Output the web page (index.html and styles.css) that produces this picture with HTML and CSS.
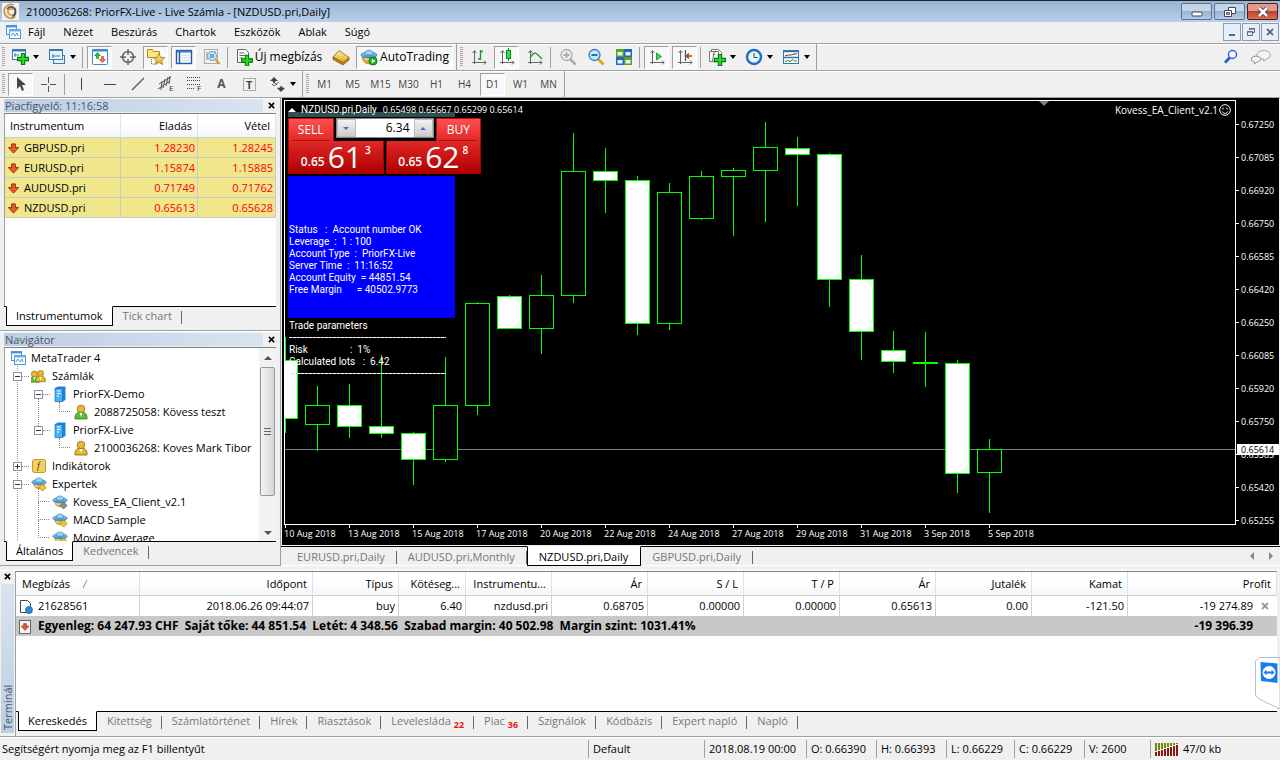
FILE: index.html
```html
<!DOCTYPE html>
<html lang="hu">
<head>
<meta charset="utf-8">
<title>2100036268: PriorFX-Live - Live Számla - [NZDUSD.pri,Daily]</title>
<link rel="stylesheet" href="styles.css">
</head>
<body>
<svg class="defs" aria-hidden="true">
  <defs>
    <linearGradient id="gold" x1="0" y1="0" x2="0" y2="1"><stop offset="0" stop-color="#fff0a0"/><stop offset="1" stop-color="#d9a520"/></linearGradient>
    <linearGradient id="blue" x1="0" y1="0" x2="0" y2="1"><stop offset="0" stop-color="#a9dcfa"/><stop offset="1" stop-color="#2f86cc"/></linearGradient>
  </defs>
  <symbol id="i-plus" viewBox="0 0 11 11"><path d="M4 .5h3V4h3.500v3H7v3.500H4V7H.5V4H4z" fill="#22dd22" stroke="#067a06"/></symbol>
  <symbol id="i-windows" viewBox="0 0 16 16"><rect x="1.500" y="1.500" width="10" height="9" fill="#fff" stroke="#4a96dc"/><path d="M1 2.500h11" stroke="#4a96dc" stroke-width="2"/><rect x="4.500" y="5.500" width="11" height="9" fill="#fff" stroke="#4a96dc"/><path d="M4 6.500h12" stroke="#6cb0ec" stroke-width="2"/><path d="M6 12l2-3 2 3 2-3 1 3" fill="none" stroke="#4a96dc"/></symbol>
  <symbol id="i-newchart" viewBox="0 0 18 18"><rect x="1.500" y="1.500" width="13" height="10" fill="#fff" stroke="#3a78ae"/><path d="M1 2.500h14" stroke="#3a78ae" stroke-width="2"/><path d="M3 7h5M4 5v4" stroke="#3a78ae"/><use href="#i-plus" x="6" y="5" width="12" height="12"/></symbol>
  <symbol id="i-profiles" viewBox="0 0 18 18"><rect x="5.500" y="7.500" width="11" height="8" fill="#e6f1fb" stroke="#3a78ae"/><rect x="1.500" y="1.500" width="13" height="10" fill="#e6f1fb" stroke="#3a78ae"/><path d="M1 2.500h14M4 8h8M5 6v4" stroke="#3a78ae"/></symbol>
  <symbol id="i-market" viewBox="0 0 18 18"><rect x="1.500" y="1.500" width="15" height="15" rx="1" fill="#fff" stroke="#3a8ad0"/><path d="M1 2.500h16" stroke="#3a8ad0" stroke-width="2"/><path d="M6.500 4.500l3 3h-2v3h-2v-3h-2z" fill="#2fc22f" stroke="#128012" stroke-width=".6"/><path d="M11.500 14.500l3-3h-2v-3h-2v3h-2z" fill="#ff7040" stroke="#b03010" stroke-width=".6"/></symbol>
  <symbol id="i-target" viewBox="0 0 18 18"><circle cx="9" cy="9" r="5.500" fill="none" stroke="#666" stroke-width="1.500"/><path d="M9 1v6M9 11v6M1 9h6M11 9h6" stroke="#666" stroke-width="1.500"/></symbol>
  <symbol id="i-navi" viewBox="0 0 18 18"><path d="M.5 1.500h5l1 2h6v6H.5z" fill="#ffe680" stroke="#b08a10"/><path d="M4.500 11v5H8" fill="none" stroke="#666" stroke-dasharray="1 1"/><path d="M12 5.500l1.700 3.800 4 .4-3 2.700.9 4.100L12 14.400l-3.600 2.100.9-4.100-3-2.700 4-.4z" fill="url(#gold)" stroke="#a87a00" stroke-width=".8"/></symbol>
  <symbol id="i-terminal" viewBox="0 0 18 18"><rect x="1.500" y="2.500" width="15" height="13" fill="#f4faff" stroke="#245ba4" stroke-width="1.400"/><path d="M2 3.500h14" stroke="#3a78c0" stroke-width="2"/><path d="M4.500 4v11" stroke="#245ba4" stroke-width="1.500"/><path d="M7 7.500h8M7 10h8M7 12.500h8" stroke="#d3e2ee"/></symbol>
  <symbol id="i-tester" viewBox="0 0 18 18"><rect x="1.500" y="1.500" width="13" height="14" fill="#f2f2f2" stroke="#aaa"/><path d="M4 4v8M7 3v9M12 3v3" stroke="#789"/><circle cx="9" cy="8" r="4.500" fill="#bfe2fa" fill-opacity=".8" stroke="#7aa4c4"/><path d="M8 6v4M10 6v4" stroke="#2a6eaa"/><path d="M12.500 11.500l4 4.500" stroke="#d8a020" stroke-width="2.500"/></symbol>
  <symbol id="i-order" viewBox="0 0 18 18"><path d="M2.500 1.500h8l3 3v10h-11z" fill="#fff" stroke="#666"/><path d="M4.500 5h5M4.500 7.500h7M4.500 10h4" stroke="#666"/><use href="#i-plus" x="6" y="6.500" width="12" height="12"/></symbol>
  <symbol id="i-book" viewBox="0 0 18 18"><path d="M1 9l6-6.500 10 7L11.500 15z" fill="url(#gold)" stroke="#8a6008" stroke-width=".8"/><path d="M1 9v2.500l10 5.500 6-5V9.500L11.500 15z" fill="#c48a10" stroke="#8a6008" stroke-width=".8"/></symbol>
  <symbol id="i-hat" viewBox="0 0 18 18"><path d="M3 9c1 7 10 7 12 0z" fill="url(#gold)" stroke="#b08a20" stroke-width=".8"/><ellipse cx="9" cy="7" rx="8" ry="3" fill="url(#blue)" stroke="#3a82b4" stroke-width=".8"/><path d="M4.500 6c0-5 8.500-5 9 0-2 1.500-7 1.500-9 0z" fill="#9bd4f4" stroke="#3a82b4" stroke-width=".8"/></symbol>
  <symbol id="i-auto" viewBox="0 0 18 18"><path d="M2 9c1 9 12 9 14 0z" fill="url(#gold)" stroke="#b08a20" stroke-width=".8"/><use href="#i-hat"/><circle cx="13" cy="13" r="4" fill="#1fb51f" stroke="#0a7a0a"/><path d="M11.800 10.700v4.600l3.600-2.300z" fill="#fff"/></symbol>
  <symbol id="i-ea" viewBox="0 0 18 18"><use href="#i-hat"/><path d="M13 9l4 4-4 4-4-4z" fill="#f4c430" stroke="#a87a00" stroke-width=".8"/></symbol>
  <symbol id="i-eagray" viewBox="0 0 18 18"><use href="#i-hat"/><path d="M13 9l4 4-4 4-4-4z" fill="#8c8c8c" stroke="#666" stroke-width=".8"/></symbol>
  <symbol id="i-axes" viewBox="0 0 18 18"><path d="M4.500 16V3M2.500 5l2-2.500 2 2.500M2 14.500h14M14 12.500l2 2-2 2" fill="none" stroke="#666"/></symbol>
  <symbol id="i-bars" viewBox="0 0 18 18"><use href="#i-axes"/><path d="M10.500 2v10M10.500 3.500H13M8 11h2.500" stroke="#1a9a2a" stroke-width="1.400"/></symbol>
  <symbol id="i-candle" viewBox="0 0 18 18"><use href="#i-axes"/><path d="M10.500 0v13" stroke="#0a8a1a"/><rect x="8.500" y="2.500" width="4" height="8" fill="#2ee04a" stroke="#0a8a1a"/></symbol>
  <symbol id="i-line" viewBox="0 0 18 18"><use href="#i-axes"/><path d="M4 10c3-5 5-6 7-4s3 3 5 5" fill="none" stroke="#1a9a2a" stroke-width="1.300"/></symbol>
  <symbol id="i-zin" viewBox="0 0 18 18"><path d="M11 11l5.500 5.500" stroke="#aaa" stroke-width="2.500"/><circle cx="7.500" cy="7" r="5.500" fill="#eee" stroke="#aaa" stroke-width="1.300"/><path d="M4.500 7h6M7.500 4v6" stroke="#aaa" stroke-width="1.800"/></symbol>
  <symbol id="i-zout" viewBox="0 0 18 18"><path d="M11 11l5.500 5.500" stroke="#d8a820" stroke-width="3"/><circle cx="7.500" cy="7" r="5.500" fill="#c5e8ff" stroke="#2f7cc0" stroke-width="1.300"/><path d="M4.500 7h6" stroke="#1d5fa8" stroke-width="1.800"/></symbol>
  <symbol id="i-tile" viewBox="0 0 18 18"><path d="M1 1h8v8H1zM9 9h8v8H9z" fill="#55a322"/><path d="M9 1h8v8H9zM1 9h8v8H1z" fill="#2565c4"/><path d="M2.500 4h5v3.500h-5zM10.500 4h5v3.500h-5zM2.500 12h5v3.500h-5zM10.500 12h5v3.500h-5z" fill="#eef6ff"/></symbol>
  <symbol id="i-scroll" viewBox="0 0 18 18"><use href="#i-axes"/><path d="M8.500 5v7l5-3.500z" fill="#3fd14f" stroke="#0a8a1a" stroke-width=".8"/></symbol>
  <symbol id="i-shift" viewBox="0 0 18 18"><use href="#i-axes"/><path d="M9.500 2v11" stroke="#2565a4" stroke-width="1.300"/><path d="M16 8h-5M13 5.500L10.500 8l2.500 2.500" fill="none" stroke="#c03a10" stroke-width="1.500"/></symbol>
  <symbol id="i-sheets" viewBox="0 0 18 18"><path d="M3.500 3.500v-2h7l3 3v9h-3" fill="#fff" stroke="#777"/><path d="M1.500 3.500h9v10h-9z" fill="#fff" stroke="#777"/></symbol>
  <symbol id="i-clock" viewBox="0 0 18 18"><circle cx="9" cy="9" r="7" fill="#eaf6ff" stroke="#1f6fc4" stroke-width="2.500"/><path d="M9 5v4.500h3.500" fill="none" stroke="#245"/></symbol>
  <symbol id="i-templ" viewBox="0 0 18 18"><rect x="1.500" y="2.500" width="15" height="13" fill="#fff" stroke="#2f7ab4"/><path d="M1 3.500h16M2 9.500h14" stroke="#2f7ab4" stroke-width="1.500"/><path d="M3 8l3-1 3 0 3-1 3 0" fill="none" stroke="#a02020"/><path d="M3 13.500l3-1 2 1 3-2 2 2 2-1" fill="none" stroke="#209030"/></symbol>
  <symbol id="i-cursor" viewBox="0 0 18 18"><path d="M5 2v12l3-3 2 5 2-1-2-5h4z" fill="#444"/></symbol>
  <symbol id="i-cross" viewBox="0 0 18 18"><path d="M8.500 2v6M8.500 11v6M1 9.500h6M10 9.500h6" stroke="#555"/></symbol>
  <symbol id="i-vline" viewBox="0 0 18 18"><path d="M8.500 3v12" stroke="#444"/></symbol>
  <symbol id="i-hline" viewBox="0 0 18 18"><path d="M3 9.500h12" stroke="#444"/></symbol>
  <symbol id="i-trend" viewBox="0 0 18 18"><path d="M3 15L15 3" stroke="#555" stroke-width="1.300"/></symbol>
  <symbol id="i-arrows" viewBox="0 0 18 18"><path d="M6 2l4 4-2.500 0-1.500 3-1.500-3H2z" fill="#444"/><path d="M7 8l2 2M4 9l2 2 5-4" fill="none" stroke="#666"/><path d="M13 17l-4-4 3-.5 1-2 1.500 2 2.500.5z" fill="#444"/></symbol>
  <symbol id="i-down" viewBox="0 0 12 12"><path d="M4 1h4v4h3.500L6 11 .5 5H4z" fill="#f05a28" stroke="#8a2008"/></symbol>
  <symbol id="i-user" viewBox="0 0 16 16"><path d="M2 15c-.5-5 2-7 6-7s6.500 2 6 7z" fill="var(--c)" stroke="#7a6410" stroke-width=".8"/><circle cx="8" cy="5" r="3.800" fill="#e8b830" stroke="#8a6a10" stroke-width=".8"/><path d="M6.500 9L8 13l1.500-4" fill="#fff"/></symbol>
  <symbol id="i-server" viewBox="0 0 16 16"><path d="M3 2l3-1.500h7.500V14l-3 1.500H3z" fill="#1d86dc"/><path d="M3 2.500h7.500v13H3z" fill="#4bb4f6" stroke="#1a6fb8" stroke-width=".7"/><path d="M5 5h3.500M5 7.500h3.500M5 10h2" stroke="#fff"/></symbol>
  <symbol id="i-close" viewBox="0 0 8 8"><path d="M1 1l6 6M7 1L1 7" stroke="currentColor" stroke-width="1.800"/></symbol>
  <symbol id="i-min" viewBox="0 0 14 12"><rect x="2" y="6" width="10" height="4" rx="1" fill="#fff" stroke="#445"/></symbol>
  <symbol id="i-restore" viewBox="0 0 14 12"><path d="M5.500 1.500h7v6h-7z" fill="#fff" stroke="#445"/><path d="M1.500 4.500h7v6h-7z" fill="#fff" stroke="#445"/><path d="M3.500 6.500h3v2h-3z" fill="#9ab" stroke="#445" stroke-width=".8"/></symbol>
</svg>

<div class="app">
  <header class="titlebar">
    <svg class="logo" viewBox="0 0 16 16"><rect width="16" height="16" fill="#f6f2ec"/><path d="M11 1.800A6.500 6.500 0 1 0 12.500 13" fill="none" stroke="#c89a58" stroke-width="1.800"/><path d="M5 6a4 4 0 0 1 7.500 2.500 4 4 0 0 1-3 4" fill="none" stroke="#555" stroke-width="2"/><path d="M10.500 6.500A2.800 2.800 0 1 0 9 11" fill="none" stroke="#d8a050" stroke-width="1.800"/></svg>
    <span class="title">2100036268: PriorFX-Live - Live Számla - [NZDUSD.pri,Daily]</span>
    <button class="wbtn" aria-label="Kis méret"><svg width="14" height="12"><use href="#i-min"/></svg></button>
    <button class="wbtn" aria-label="Visszaállítás"><svg width="14" height="12"><use href="#i-restore"/></svg></button>
    <button class="wbtn wclose" aria-label="Bezárás"><svg width="14" height="12" viewBox="0 0 14 12"><path d="M3 2l8 8M11 2l-8 8" stroke="#445" stroke-width="4.500"/><path d="M3 2l8 8M11 2l-8 8" stroke="#fff" stroke-width="2.500"/></svg></button>
  </header>

  <nav class="menubar">
    <svg width="16" height="16"><use href="#i-windows"/></svg>
    <button>Fájl</button><button>Nézet</button><button>Beszúrás</button><button>Chartok</button><button>Eszközök</button><button>Ablak</button><button>Súgó</button>
    <span class="grow"></span>
    <button class="mdi" aria-label="Kis méret"><svg width="10" height="10" viewBox="0 0 10 10"><path d="M2 8h6" stroke="#667" stroke-width="2"/></svg></button>
    <button class="mdi" aria-label="Visszaállítás"><svg width="10" height="10" viewBox="0 0 10 10"><path d="M3.500 3V1.500h5v4H7M1.500 4.500h5v4h-5zM1 5h6M3 2h6" fill="none" stroke="#667"/></svg></button>
    <button class="mdi" aria-label="Bezárás"><svg width="8" height="8"><use href="#i-close"/></svg></button>
  </nav>

  <div class="toolrow">
    <i class="grip"></i>
    <button class="tb drop" aria-label="Új chart"><svg><use href="#i-newchart"/></svg></button>
    <button class="tb drop" aria-label="Profilok"><svg><use href="#i-profiles"/></svg></button>
    <i class="sep"></i>
    <button class="tb on" aria-label="Piacfigyelő"><svg><use href="#i-market"/></svg></button>
    <button class="tb" aria-label="Adatablak"><svg><use href="#i-target"/></svg></button>
    <button class="tb on" aria-label="Navigátor"><svg><use href="#i-navi"/></svg></button>
    <button class="tb on" aria-label="Terminál"><svg><use href="#i-terminal"/></svg></button>
    <button class="tb" aria-label="Stratégia teszter"><svg><use href="#i-tester"/></svg></button>
    <i class="sep"></i>
    <button class="tb order"><svg><use href="#i-order"/></svg>Új megbízás</button>
    <button class="tb" aria-label="MetaEditor"><svg><use href="#i-book"/></svg></button>
    <button class="tb on auto"><svg><use href="#i-auto"/></svg>AutoTrading</button>
    <i class="end"></i>
    <i class="grip"></i>
    <button class="tb" aria-label="Oszlopok"><svg><use href="#i-bars"/></svg></button>
    <button class="tb on" aria-label="Gyertyák"><svg><use href="#i-candle"/></svg></button>
    <button class="tb" aria-label="Vonal"><svg><use href="#i-line"/></svg></button>
    <i class="sep"></i>
    <button class="tb" aria-label="Nagyítás"><svg><use href="#i-zin"/></svg></button>
    <button class="tb" aria-label="Kicsinyítés"><svg><use href="#i-zout"/></svg></button>
    <button class="tb" aria-label="Mozaik"><svg><use href="#i-tile"/></svg></button>
    <i class="sep"></i>
    <button class="tb on" aria-label="Automatikus görgetés"><svg><use href="#i-scroll"/></svg></button>
    <button class="tb on" aria-label="Chart eltolás"><svg><use href="#i-shift"/></svg></button>
    <i class="sep"></i>
    <button class="tb drop" aria-label="Indikátorok"><svg viewBox="0 0 18 18"><use href="#i-sheets"/><text x="4" y="11" class="serif">f</text><use href="#i-plus" x="6" y="6" width="12" height="12"/></svg></button>
    <button class="tb drop" aria-label="Periódusok"><svg><use href="#i-clock"/></svg></button>
    <button class="tb drop" aria-label="Sablonok"><svg><use href="#i-templ"/></svg></button>
    <i class="end"></i>
    <span class="grow"></span>
    <button class="tb" aria-label="Keresés"><svg viewBox="0 0 18 18"><path d="M8 9.500L3 14.500" stroke="#2a62d0" stroke-width="3"/><circle cx="10.500" cy="6.500" r="4" fill="#fff" stroke="#2a6ae0" stroke-width="1.500"/></svg></button>
    <button class="tb chat" aria-label="Üzenetek"><svg class="wide" viewBox="0 0 24 18"><path d="M15 13.500v-2.200C4 11 6 2 15 2c9 0 9 7.500 3 9.200z" fill="#f4f4f4" stroke="#999"/><path d="M5 16.500v-2.200c-5-.5-5-6.300 1.500-6.300s6.500 5.500 1.500 6.300z" fill="#f4f4f4" stroke="#888"/></svg></button>
  </div>

  <div class="toolrow second">
    <i class="grip"></i>
    <button class="tb on" aria-label="Kurzor"><svg><use href="#i-cursor"/></svg></button>
    <button class="tb" aria-label="Szálkereszt"><svg><use href="#i-cross"/></svg></button>
    <i class="sep"></i>
    <button class="tb" aria-label="Függőleges vonal"><svg><use href="#i-vline"/></svg></button>
    <button class="tb" aria-label="Vízszintes vonal"><svg><use href="#i-hline"/></svg></button>
    <button class="tb" aria-label="Trendvonal"><svg><use href="#i-trend"/></svg></button>
    <button class="tb" aria-label="Csatorna"><svg viewBox="0 0 18 18"><path d="M2 9L14 2M1 14l12-8M5 6l-1 9M8 4L6 13M11 2L9 11M13 1l-1 8" stroke="#555"/><text x="12" y="16" class="tag">E</text></svg></button>
    <button class="tb" aria-label="Fibonacci"><svg viewBox="0 0 18 18"><path d="M2 2.500h13M2 5.500h13M2 9.500h13M2 13.500h8" stroke="#444" stroke-dasharray="1 1"/><text x="12" y="16" class="tag">F</text></svg></button>
    <button class="tb letter">A</button>
    <button class="tb" aria-label="Szövegcímke"><svg viewBox="0 0 18 18"><rect x="2.500" y="3.500" width="12" height="12" fill="none" stroke="#666" stroke-dasharray="1 1"/><text x="5" y="14" class="tee">T</text></svg></button>
    <button class="tb drop" aria-label="Nyilak"><svg><use href="#i-arrows"/></svg></button>
    <i class="end"></i>
    <i class="grip"></i>
    <button class="tb tf">M1</button><button class="tb tf">M5</button><button class="tb tf">M15</button><button class="tb tf">M30</button><button class="tb tf">H1</button><button class="tb tf">H4</button><button class="tb tf on">D1</button><button class="tb tf">W1</button><button class="tb tf">MN</button>
    <i class="end"></i>
  </div>

  <main class="work">
    <aside class="docks">
      <section class="dock market">
        <div class="dockhead"><h2>Piacfigyelő: 11:16:58</h2><button aria-label="Bezárás"><svg width="7" height="7"><use href="#i-close"/></svg></button></div>
        <div class="dockbody">
          <table class="quotes">
            <colgroup><col><col class="cbid"><col class="cask"></colgroup>
            <thead><tr><th>Instrumentum</th><th>Eladás</th><th>Vétel</th></tr></thead>
            <tbody>
              <tr><td><svg><use href="#i-down"/></svg>GBPUSD.pri</td><td>1.28230</td><td>1.28245</td></tr>
              <tr><td><svg><use href="#i-down"/></svg>EURUSD.pri</td><td>1.15874</td><td>1.15885</td></tr>
              <tr><td><svg><use href="#i-down"/></svg>AUDUSD.pri</td><td>0.71749</td><td>0.71762</td></tr>
              <tr><td><svg><use href="#i-down"/></svg>NZDUSD.pri</td><td>0.65613</td><td>0.65628</td></tr>
            </tbody>
          </table>
        </div>
        <div class="tabs"><button class="tab active">Instrumentumok</button><button class="tab">Tick chart</button></div>
      </section>

      <section class="dock navi">
        <div class="dockhead"><h2>Navigátor</h2><button aria-label="Bezárás"><svg width="7" height="7"><use href="#i-close"/></svg></button></div>
        <div class="dockbody treebox">
          <ul class="tree">
            <li class="l0"><svg><use href="#i-windows"/></svg>MetaTrader 4</li>
            <li class="l1"><i class="box"></i><svg class="green" viewBox="0 0 16 16"><use href="#i-user" x="-3" y="1" width="13" height="15"/><use class="gold" href="#i-user" x="3" y="0" width="13" height="16"/></svg>Számlák</li>
            <li class="l2"><i class="box"></i><svg><use href="#i-server"/></svg>PriorFX-Demo</li>
            <li class="l3"><i class="stub"></i><svg class="green"><use href="#i-user"/></svg>2088725058: Kövess teszt</li>
            <li class="l2"><i class="box tall"></i><svg><use href="#i-server"/></svg>PriorFX-Live</li>
            <li class="l3"><i class="stub"></i><svg class="gold"><use href="#i-user"/></svg>2100036268: Koves Mark Tibor</li>
            <li class="l1"><i class="box plus"></i><svg viewBox="0 0 16 16"><rect x="1.500" y="1.500" width="13" height="13" rx="2" fill="#f6d060" stroke="#c09820"/><text x="6" y="11" class="serif">f</text></svg>Indikátorok</li>
            <li class="l1"><i class="box"></i><svg><use href="#i-ea"/></svg>Expertek</li>
            <li class="leaf"><i class="stub"></i><svg><use href="#i-eagray"/></svg>Kovess_EA_Client_v2.1</li>
            <li class="leaf"><i class="stub"></i><svg><use href="#i-ea"/></svg>MACD Sample</li>
            <li class="leaf"><i class="stub"></i><svg><use href="#i-ea"/></svg>Moving Average</li>
          </ul>
          <div class="scrollbar"><i class="tri up"></i><div class="thumb"><i></i></div><span class="grow"></span><i class="tri dn"></i></div>
        </div>
        <div class="tabs"><button class="tab active">Általános</button><button class="tab">Kedvencek</button></div>
      </section>
    </aside>

    <section class="charts">
      <div class="chart">
        <div class="plot">
          <svg class="candles" id="candles" width="950" height="423"></svg>
          <i class="shiftmark"></i>
          <div class="eaname">Kovess_EA_Client_v2.1<svg width="12" height="12" viewBox="0 0 12 12"><circle cx="6" cy="6" r="5.300" fill="none" stroke="#fff"/><path d="M4 3.500v2M8 3.500v2M3 7.500c1.500 2.500 4.500 2.500 6 0" fill="none" stroke="#fff"/></svg></div>
          <div class="overlay">
            <div class="symbol"><i class="tri up"></i><span>NZDUSD.pri,Daily</span><span class="ohlc">0.65498 0.65667 0.65299 0.65614</span></div>
            <div class="oneclick">
              <div class="octop">
                <button class="side">SELL</button>
                <div class="lots"><button aria-label="Kevesebb"><i class="tri dn"></i></button><input aria-label="Kötésegység" value="6.34"><button aria-label="Több"><i class="tri up"></i></button></div>
                <button class="side">BUY</button>
              </div>
              <div class="ocprices">
                <div class="price"><span>0.65</span><b>61</b><sup>3</sup></div>
                <div class="price"><span>0.65</span><b>62</b><sup>8</sup></div>
              </div>
            </div>
            <div class="status"><pre>Status   :  Account number OK
Leverage  :  1 : 100
Account Type  :  PriorFX-Live
Server Time  :  11:16:52
Account Equity  = 44851.54
Free Margin      = 40502.9773</pre></div>
            <div class="params">
              <p>Trade parameters</p>
              <hr>
              <pre>Risk                 :  1%
Calculated lots   :  6.42</pre>
              <hr>
            </div>
          </div>
        </div>
        <ul class="scale">
          <li>0.67250</li><li>0.67085</li><li>0.66920</li><li>0.66750</li><li>0.66585</li><li>0.66420</li><li>0.66250</li><li>0.66085</li><li>0.65920</li><li>0.65750</li><li>0.65585</li><li>0.65420</li><li>0.65255</li>
        </ul>
        <span class="now">0.65614</span>
        <ul class="dates"><li>10 Aug 2018</li><li>13 Aug 2018</li><li>15 Aug 2018</li><li>17 Aug 2018</li><li>20 Aug 2018</li><li>22 Aug 2018</li><li>24 Aug 2018</li><li>27 Aug 2018</li><li>29 Aug 2018</li><li>31 Aug 2018</li><li>3 Sep 2018</li><li>5 Sep 2018</li></ul>
      </div>
      <div class="tabs charttabs">
        <button class="tab">EURUSD.pri,Daily</button><button class="tab">AUDUSD.pri,Monthly</button><button class="tab active">NZDUSD.pri,Daily</button><button class="tab">GBPUSD.pri,Daily</button>
        <span class="grow"></span>
        <button class="pager" aria-label="Előző"><i class="tri lf"></i></button><button class="pager" aria-label="Következő"><i class="tri rt"></i></button>
      </div>
    </section>
  </main>

  <section class="terminal">
    <div class="strip"><button aria-label="Bezárás"><svg width="7" height="7"><use href="#i-close"/></svg></button><h2>Terminál</h2></div>
    <div class="termbody">
      <div class="termtable">
        <table class="trades">
          <colgroup><col class="w124"><col class="w173"><col class="w86"><col class="w67"><col class="w86"><col class="w96"><col class="w96"><col class="w96"><col class="w96"><col class="w96"><col class="w96"><col></colgroup>
          <thead><tr><th>Megbízás<svg class="sort" width="10" height="8" viewBox="0 0 10 8"><path d="M1 8L5 0" stroke="#888"/></svg></th><th>Időpont</th><th>Típus</th><th>Kötéseg...</th><th>Instrumentu...</th><th>Ár</th><th>S / L</th><th>T / P</th><th>Ár</th><th>Jutalék</th><th>Kamat</th><th>Profit</th></tr></thead>
          <tbody>
            <tr><td><svg width="14" height="15" viewBox="0 0 14 15"><path d="M1.500 1.500h7l3 3v9h-10z" fill="#fff" stroke="#444"/><circle cx="10" cy="11" r="3.500" fill="#2a8ad8" stroke="#1a5a98" stroke-width=".7"/></svg>21628561</td><td>2018.06.26 09:44:07</td><td>buy</td><td>6.40</td><td>nzdusd.pri</td><td>0.68705</td><td>0.00000</td><td>0.00000</td><td>0.65613</td><td>0.00</td><td>-121.50</td><td class="profit">-19 274.89<button aria-label="Pozíció zárása"><svg width="8" height="8"><use href="#i-close"/></svg></button></td></tr>
            <tr class="sum"><td colspan="11"><svg width="12" height="14" viewBox="0 0 12 14"><rect x=".5" y=".5" width="11" height="13" fill="#f4f4f4" stroke="#666"/><use href="#i-down" x="2" y="3" width="8" height="8"/></svg>Egyenleg: 64 247.93 CHF&nbsp; Saját tőke: 44 851.54&nbsp; Letét: 4 348.56&nbsp; Szabad margin: 40 502.98&nbsp; Margin szint: 1031.41%</td><td class="profit">-19 396.39</td></tr>
          </tbody>
        </table>
      </div>
      <div class="tabs termtabs">
        <button class="tab active">Kereskedés</button><button class="tab">Kitettség</button><button class="tab">Számlatörténet</button><button class="tab">Hírek</button><button class="tab">Riasztások</button><button class="tab">Levelesláda<sub>22</sub></button><button class="tab">Piac<sub>36</sub></button><button class="tab">Szignálok</button><button class="tab">Kódbázis</button><button class="tab">Expert napló</button><button class="tab">Napló</button>
      </div>
    </div>
    <button class="remote" aria-label="TeamViewer"><svg width="25" height="52" viewBox="0 0 25 52"><path d="M25 .5H4L.5 4v34L4 42l21 10z" fill="#fff" stroke="#b4c0c8"/><path d="M5.500 5l17 1.500V26L6 24z" fill="#1a7cf0"/><circle cx="14" cy="15.500" r="6.500" fill="#fff"/><path d="M8.500 15.500l3-2.700v1.700h5v-1.700l3 2.700-3 2.700v-1.700h-5v1.700z" fill="#1a7cf0"/></svg></button>
  </section>

  <footer class="statusbar">
    <span class="help">Segítségért nyomja meg az F1 billentyűt</span>
    <span class="w116">Default</span><span class="w102">2018.08.19 00:00</span><span class="w70">O: 0.66390</span><span class="w70">H: 0.66393</span><span class="w68">L: 0.66229</span><span class="w70">C: 0.66229</span><span class="w66">V: 2600</span>
    <span class="net"><svg width="24" height="14" id="net"></svg>47/0 kb</span>
  </footer>
</div>
<script src="chart.js"></script>
</body>
</html>
```
FILE: styles.css
```css
* { box-sizing: border-box; }
body { margin: 0; background: #f0f0f0; font: 11px/16px "Open Sans", "Noto Sans", sans-serif; color: #000; }
button { font: inherit; color: inherit; background: none; border: 0; padding: 0; margin: 0; white-space: nowrap; }
ul { list-style: none; margin: 0; padding: 0; }
h2, p, pre { margin: 0; font: inherit; }
svg { flex: none; display: block; }
.defs { position: absolute; width: 0; height: 0; }
.tag { font-size: 8px; fill: #333; }
.tee { font-size: 11px; font-weight: 700; fill: #444; }
.serif { font: italic 10px "Liberation Serif", serif; fill: #443; }
.grow { flex: 1; }
.app { display: flex; flex-direction: column; min-height: 100vh; }

.titlebar { display: flex; align-items: center; height: 22px; padding: 0 2px; gap: 2px; border-top: 1px solid #222; background: linear-gradient(#98b2d0, #b8d0ea); }
.logo { width: 17px; height: 17px; }
.title { flex: 1; padding-left: 5px; }
.wbtn { display: flex; align-items: center; justify-content: center; width: 31px; height: 17px; border: 1px solid #5b7290; border-radius: 2px; background: linear-gradient(#c3d5e9 45%, #9ab2ce 50%, #b4cbe4); }
.wclose { background: linear-gradient(#e09a8c 45%, #c0402a 50%, #d87058); border-color: #5a1a18; }

.menubar { display: flex; align-items: center; height: 21px; padding: 0 1px 2px 5px; }
.menubar > button { margin-left: 18px; }
.menubar > button:first-of-type { margin-left: 7px; }
.menubar > .mdi { display: flex; align-items: center; justify-content: center; width: 18px; height: 18px; margin-left: 1px; border: 1px solid #8a9cb0; background: #e4effa; color: #667; }

.toolrow { display: flex; align-items: center; gap: 3px; height: 27px; padding: 0 4px 0 2px; border-top: 1px solid #a0a0a0; box-shadow: inset 0 1px #fff; font-size: 12px; }
.toolrow.second { height: 28px; border-bottom: 1px solid #a0a0a0; }
.grip { flex: none; width: 3px; height: 20px; background: repeating-linear-gradient(#a8a8a8 0 1px, transparent 1px 2px); }
.sep { flex: none; width: 1px; height: 21px; margin: 0 1px 0 0; background: #a0a0a0; }
.end { flex: none; width: 1px; align-self: stretch; background: #a0a0a0; }
.tb { flex: none; display: flex; align-items: center; justify-content: center; width: 25px; height: 23px; }
.tb svg { width: 18px; height: 18px; }
.tb svg.wide { width: 22px; }
.tb.on { border: 1px solid; border-color: #a0a0a0 #fff #fff #a0a0a0; background: #f8f8f8; }
.tb.drop { width: 34px; justify-content: flex-start; padding-left: 3px; }
.tb.drop::after { content: ""; margin-left: 4px; border: 3px solid transparent; border-top: 4px solid #000; border-bottom: 0; }
.tb.order { width: 93px; gap: 2px; }
.tb.auto { width: 97px; gap: 2px; }
.tb.chat { width: 30px; }
.tb.letter { font-weight: 700; color: #555; }
.tb.tf { font-size: 10px; color: #444; }

.work { display: flex; height: 468px; flex: none; }
.docks { display: flex; flex-direction: column; width: 281px; flex: none; border-right: 1px solid #a0a0a0; }
.dock { display: flex; flex-direction: column; min-height: 0; padding: 0 4px; border-top: 1px solid #fff; }
.market { flex: none; height: 233px; border-bottom: 1px solid #a0a0a0; }
.navi { flex: 1; border-bottom: 1px solid #a0a0a0; }
.navi .dockhead { margin: 1px 0; }
.dockhead { display: flex; align-items: center; flex: none; height: 13px; gap: 5px; margin-bottom: 1px; }
.dockhead h2 { flex: 1; line-height: 13px; color: #44546a; padding-left: 1px; background: linear-gradient(90deg, #bdcde0, #d9e4f1); }
.dockhead button { padding-right: 1px; }
.dockbody { flex: 1; min-height: 0; overflow: hidden; background: #fff; border-top: 1px solid #808080; border-left: 1px solid #a0a0a0; }
table { width: 100%; border-collapse: separate; border-spacing: 0; table-layout: fixed; font-size: 11px; }
th, td { padding: 0 5px; text-align: right; white-space: nowrap; overflow: hidden; }
th { height: 24px; font-weight: 400; background: linear-gradient(#fff 40%, #f3f5f7); border-right: 1px solid #dfe3e8; border-bottom: 1px solid #d0d0d0; }
th:first-child, td:first-child { text-align: left; }
td svg { display: inline-block; vertical-align: middle; margin-right: 5px; }
.cbid { width: 77px; }
.cask { width: 78px; }
.quotes td { height: 20px; padding: 0 2px 0 3px; background: #f0e68c; border-right: 1px solid #c8c8c8; border-bottom: 1px solid #c8c8c8; color: #f00; }
.quotes td:first-child { color: #000; }
.quotes td svg { width: 11px; height: 11px; }

.tabs { position: relative; display: flex; align-items: flex-start; height: 24px; flex: none; padding-left: 2px; border-top: 1px solid #000; }
.tab { position: relative; height: 18px; line-height: 18px; padding: 0 10px; color: #777; }
.tab::after { content: ""; position: absolute; right: 0; top: 4px; height: 13px; border-right: 1px solid #666; }
.tab.active { height: 20px; margin-top: -1px; padding: 0 9px; background: #fff; color: #000; border: 1px solid #000; border-top-color: #fff; }
.tab.active::after { display: none; }

.treebox { display: flex; }
.tree { flex: 1; min-width: 0; padding-top: 1px; line-height: 18px; white-space: nowrap; background: repeating-linear-gradient(#999 0 1px, transparent 1px 2px) 12px 18px / 1px 100% no-repeat; }
.tree li { display: flex; align-items: center; gap: 5px; height: 18px; }
.tree svg { width: 16px; height: 16px; }
.l0 { padding-left: 5px; }
.l1 { padding-left: 8px; }
.l2 { padding-left: 29px; }
.l3 { padding-left: 54px; }
.green { --c: #3cc83c; }
.gold { --c: #e8b830; }
.box { position: relative; flex: none; width: 9px; height: 9px; margin-right: 4px; border: 1px solid #8a94a0; background: #fff linear-gradient(#335, #335) 50% 50% / 5px 1px no-repeat; }
.box.plus { background: linear-gradient(#335, #335) 50% 50% / 5px 1px no-repeat, linear-gradient(#335, #335) 50% 50% / 1px 5px no-repeat #fff; }
.box::after { content: ""; position: absolute; left: 8px; top: 3px; width: 7px; border-top: 1px dotted #888; }
.box.tall::before { content: ""; position: absolute; left: 3px; bottom: 8px; height: 27px; border-left: 1px dotted #888; }
.stub { flex: none; width: 11px; height: 10px; margin-top: -10px; border-left: 1px dotted #888; border-bottom: 1px dotted #888; }
.l3 .stub { margin-right: -2px; }
.leaf { padding-left: 33px; }
.leaf .stub { height: 18px; margin-top: -18px; margin-right: -2px; }
.scrollbar { flex: none; display: flex; flex-direction: column; align-items: center; width: 17px; padding: 8px 0 6px; background: #f2f2f2; }
.thumb { flex: none; display: flex; align-items: center; justify-content: center; width: 15px; height: 129px; margin-top: 7px; border: 1px solid #979797; border-radius: 2px; background: linear-gradient(90deg, #f4f4f4, #d4d4d8); }
.thumb i { width: 7px; height: 8px; background: repeating-linear-gradient(#666 0 1px, transparent 1px 3px); }

.tri { flex: none; width: 0; height: 0; border: 4px solid transparent; }
.tri.up { border-top: 0; border-bottom-color: #555; }
.tri.dn { border-bottom: 0; border-top-color: #555; }
.tri.lf { border-left: 0; border-right-color: #888; }
.tri.rt { border-right: 0; border-left-color: #888; }

.charts { flex: 1; min-width: 0; display: flex; flex-direction: column; }
.chart { position: relative; flex: 1; min-height: 0; display: grid; grid-template: minmax(0, 1fr) 20px / 1fr 43px; margin: 0 1px 1px 1px; padding: 2px 0 0 2px; background: #000; color: #fff; font-size: 9px; line-height: 12px; }
.plot { position: relative; overflow: hidden; border: 1px solid #fff; }
.candles { position: absolute; left: 0; top: 0; }
.shiftmark { position: absolute; left: 754px; top: 0; border: 5px solid transparent; border-top-color: #708090; border-bottom: 0; }
.eaname { position: absolute; right: 4px; top: 3px; display: flex; align-items: center; gap: 1px; font-size: 10px; }
.overlay { position: absolute; left: 3px; top: 1px; width: 210px; font: 10px/12px Roboto, sans-serif; }
.symbol { display: flex; align-items: center; gap: 5px; height: 15px; white-space: nowrap; background: linear-gradient(#2f4f4f, #2f4f4f) 0 100% / 167px 5px no-repeat; }
.symbol .tri { border-bottom-color: #fff; }
.symbol .ohlc { margin-left: 1px; font: 9px/12px "Open Sans", sans-serif; }
.oneclick { width: 193px; margin-top: 1px; font: 12px/16px "Open Sans", sans-serif; }
.octop { display: flex; gap: 2px; }
.side { flex: 1; height: 23px; border: 1px solid #b01010; border-bottom: 0; background: linear-gradient(#b01010, #b01010) 50% 100% / 38px 1px no-repeat, linear-gradient(#ff5050, #e02828); }
.lots { display: flex; width: 98px; height: 20px; margin-bottom: 2px; border: 1px solid #888; background: #fff; }
.lots button { width: 19px; display: flex; align-items: center; justify-content: center; background: linear-gradient(#f2f2f2, #ccc); border: 1px solid #bbb; }
.lots .tri { border-width: 3px; }
.lots .tri.up { border-top: 0; border-bottom-color: #56c; }
.lots .tri.dn { border-bottom: 0; border-top-color: #56c; }
.lots input { flex: 1; min-width: 0; width: 10px; border: 0; padding: 0 4px; text-align: right; font: inherit; color: #000; }
.ocprices { display: flex; gap: 2px; }
.price { flex: 1; display: flex; justify-content: center; align-items: flex-end; gap: 3px; height: 33px; padding-bottom: 2px; border: 1px solid #a00; border-top: 0; background: linear-gradient(#e02828, #b00000); }
.price span { font-weight: 600; line-height: 18px; }
.price b { font-size: 30px; line-height: 29px; font-weight: 400; }
.price sup { align-self: flex-start; font-weight: 600; line-height: 18px; }
.status { width: 167px; height: 142px; margin-top: 2px; padding: 48px 0 0 1px; background: #00f; }
.params { width: 159px; padding: 2px 1px 0; }
.params hr { height: 1px; margin: 5px 0 6px; border: 0; background: repeating-linear-gradient(90deg, #fff 0 3px, #999 3px 4px); }
.scale { min-height: 0; padding-top: 8px; }
.scale li { display: flex; align-items: center; height: 33px; gap: 2px; }
.scale li::before { content: ""; width: 3px; border-top: 1px solid #fff; }
.now { position: absolute; right: 0; top: 346px; width: 42px; height: 11px; line-height: 11px; padding-left: 4px; background: #fff; color: #000; }
.dates { grid-column: 1 / 3; display: flex; overflow: hidden; }
.dates li { flex: none; width: 64px; padding: 3px 0 0; background: linear-gradient(#fff, #fff) 1px 0 / 1px 3px no-repeat; white-space: nowrap; }
.charttabs { height: 20px; border-bottom: 1px solid #fff; padding-left: 5px; }
.charttabs .tab { padding: 0 12px 0 11px; line-height: 19px; }
.charttabs .pager { width: 19px; height: 18px; display: flex; align-items: center; justify-content: center; }

.terminal { position: relative; flex: 1; display: flex; margin-top: 4px; border-top: 1px solid #fff; padding-right: 3px; }
.strip { flex: none; display: flex; flex-direction: column; align-items: center; width: 15px; padding: 2px 0 3px; gap: 4px; }
.strip h2 { flex: 1; width: 13px; line-height: 13px; writing-mode: vertical-rl; transform: rotate(180deg); color: #44546a; background: linear-gradient(#bdcde0, #d9e4f1); padding-top: 3px; }
.termbody { flex: 1; min-width: 0; display: flex; flex-direction: column; border-top: 1px solid #808080; border-left: 1px solid #a0a0a0; }
.termtable { flex: 1; background: #fff; }
.trades th:first-child { padding-left: 6px; }
.trades td { height: 20px; padding: 0 3px; border-right: 1px solid #d0d0d0; }
.trades td:last-child { border-right: 0; }
.sort { display: inline-block; margin-left: 12px; }
.sum td { background: #c8c8c8; font-size: 12px; font-weight: 700; border: 0; }
.sum td svg { margin-right: 7px; }
.trades .profit { padding-right: 24px; position: relative; }
.profit button { position: absolute; right: 8px; top: 6px; color: #999; }
.profit button svg { display: block; margin: 0; }
.w67 { width: 67px; } .w86 { width: 86px; } .w96 { width: 96px; } .w124 { width: 124px; } .w173 { width: 173px; }
.termtabs { height: 25px; }
.tab sub { margin-left: 3px; font-size: 9px; font-weight: 700; line-height: 9px; color: #e81818; }
.remote { position: absolute; right: 0; top: 86px; }

.statusbar { display: flex; align-items: center; height: 24px; padding-top: 1px; border-top: 1px solid #a0a0a0; box-shadow: inset 0 1px #fff; }
.statusbar span { flex: none; height: 18px; line-height: 18px; padding-left: 4px; border-left: 1px solid #a0a0a0; white-space: nowrap; }
.statusbar .help { flex: 1; padding-left: 2px; border: 0; }
.statusbar .net { display: flex; align-items: center; gap: 4px; width: 130px; }
.w66 { width: 66px; } .w68 { width: 68px; } .w70 { width: 70px; } .w102 { width: 102px; } .w116 { width: 116px; }
```
FILE: chart.js
```js
// Daily candles: [body top, body bottom, wick top, wick bottom, filled], 32px apart.
const candles = [
  [259, 317, 236, 332, 1], [304, 323, 285, 350, 0], [304, 325, 283, 337, 1], [325, 332, 254, 337, 1],
  [332, 358, 331, 384, 1], [304, 358, 256, 361, 0], [202, 304, 201, 314, 0], [195, 227, 194, 227, 1],
  [194, 227, 174, 253, 0], [70, 194, 32, 202, 0], [70, 79, 47, 112, 1], [79, 222, 75, 234, 1],
  [91, 222, 82, 229, 0], [75, 117, 70, 119, 0], [69, 75, 67, 135, 0], [46, 69, 21, 121, 0],
  [47, 53, 36, 105, 1], [53, 178, 52, 206, 1], [178, 230, 154, 259, 1], [249, 260, 230, 272, 1],
  [261, 262, 231, 286, 1], [262, 372, 259, 392, 1], [348, 371, 338, 412, 0]
];
const green = '#00ff00';
let out = '<path d="M0 348.500H950" stroke="#708090"/>';
candles.forEach(([top, bottom, high, low, filled], i) => {
  const x = i * 32;
  out += `<path d="M${x + 0.5} ${high}V${low}" stroke="${green}"/>` +
    `<rect x="${x - 11.5}" y="${top + 0.5}" width="24" height="${bottom - top}" fill="${filled ? '#fff' : '#000'}" stroke="${green}"/>`;
});
document.getElementById('candles').innerHTML = out;

// Connection strength bars.
let bars = '';
for (let i = 0; i < 8; i++) {
  const split = 9 - i;
  bars += `<path d="M${i * 3 + 1} 1V${split}" stroke="#6a8a10" stroke-width="2"/><path d="M${i * 3 + 1} ${split + 1}V14" stroke="#8a1a10" stroke-width="2"/>`;
}
document.getElementById('net').innerHTML = bars;
```
